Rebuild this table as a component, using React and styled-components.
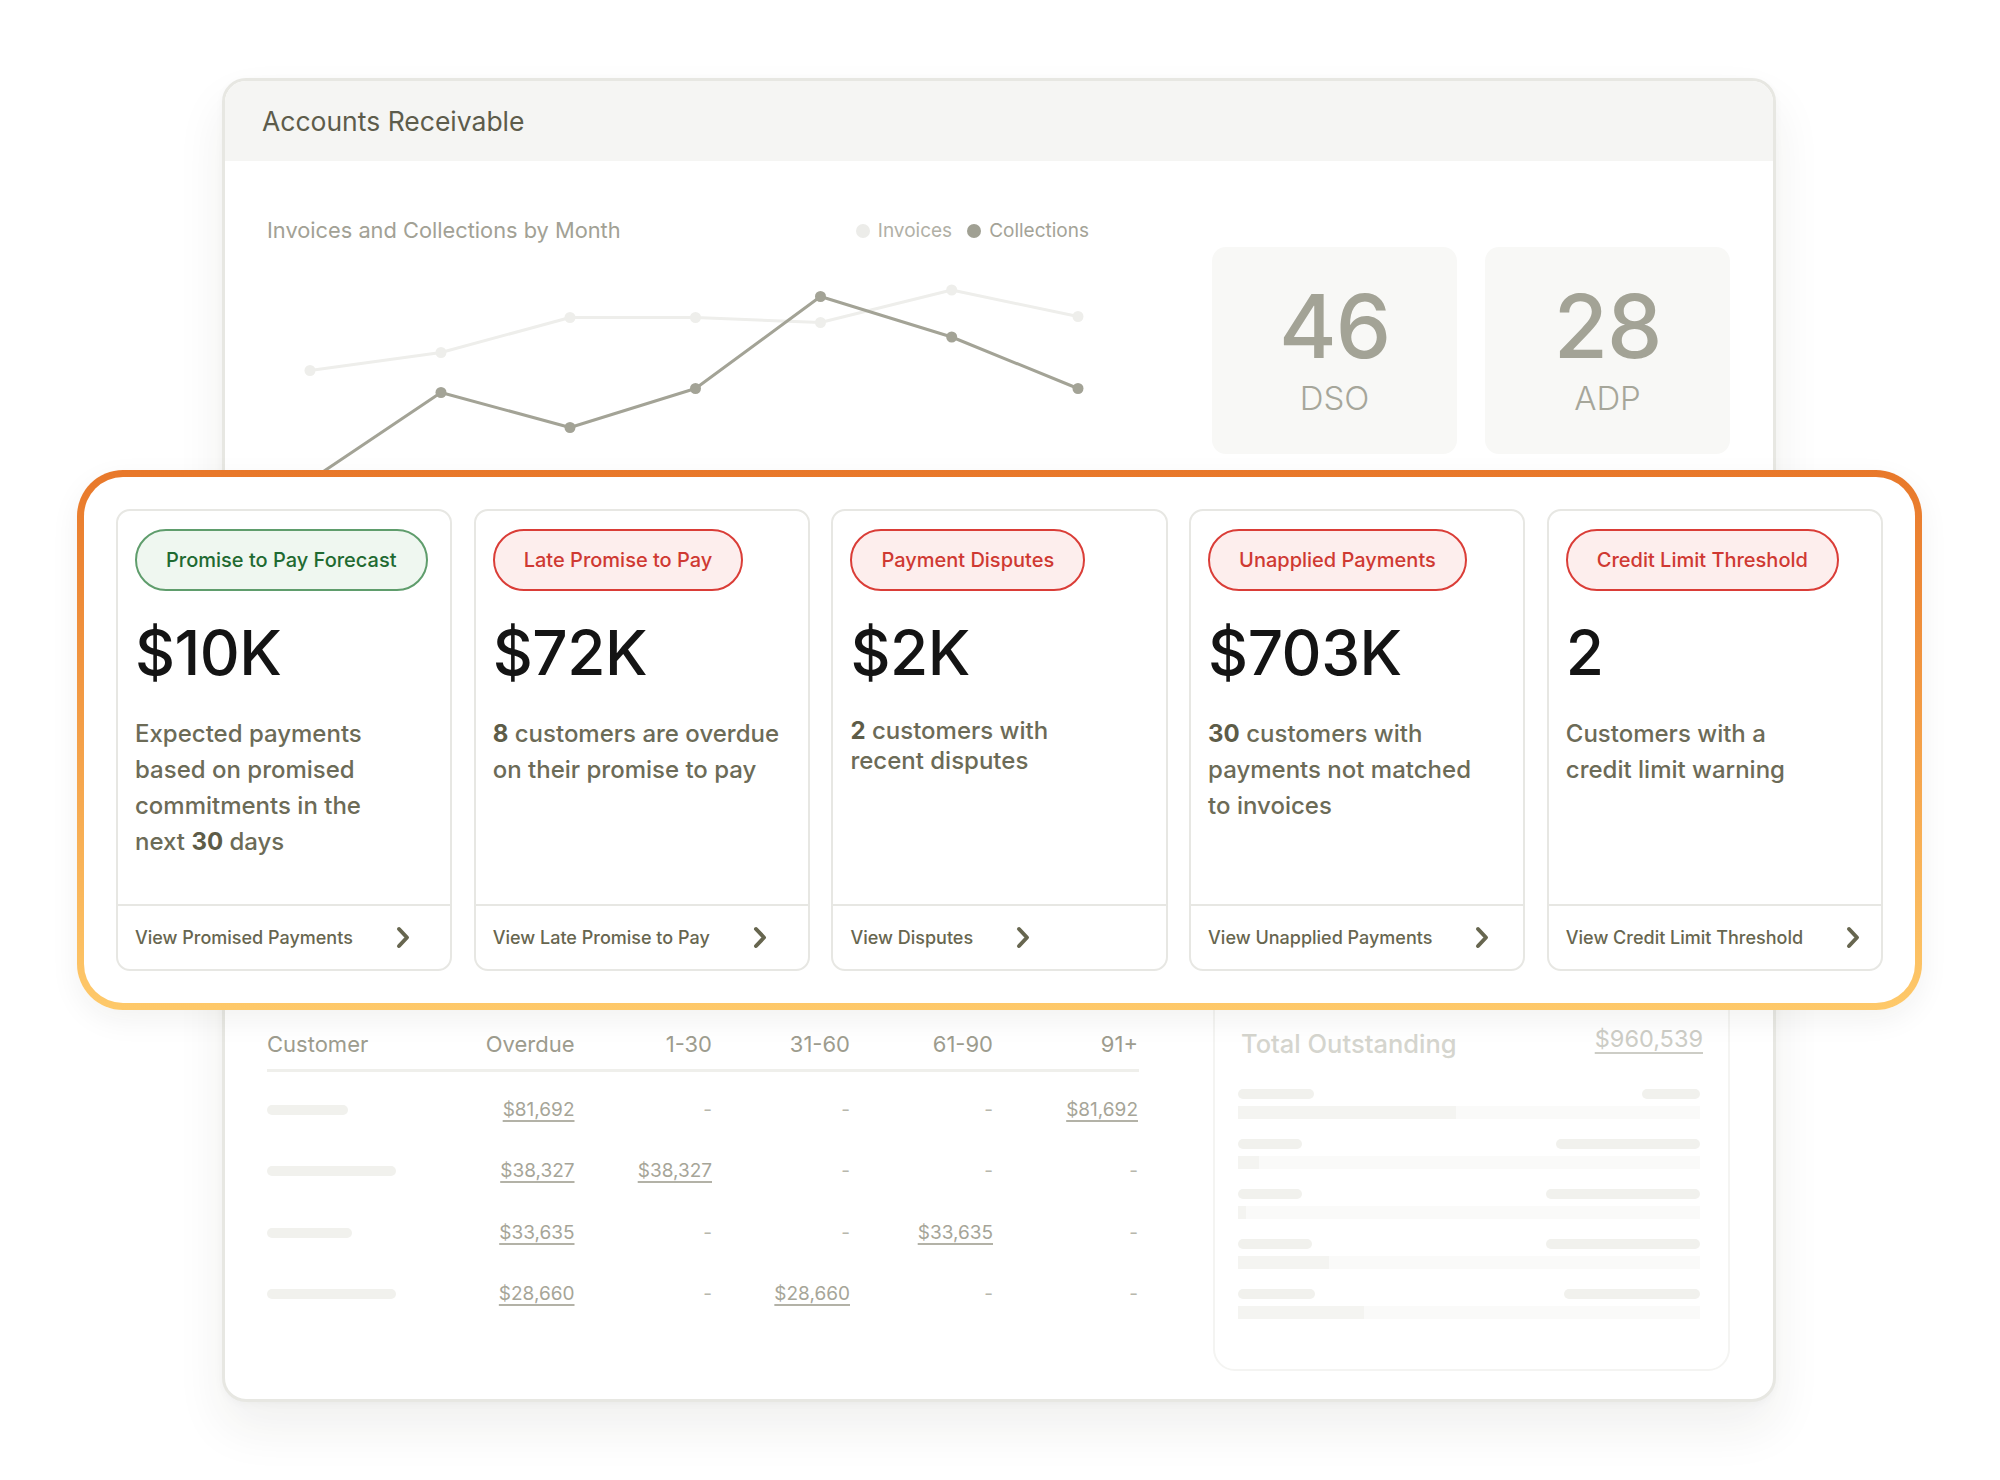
import React from "react";
import styled, { createGlobalStyle, css } from "styled-components";

const GlobalStyle = createGlobalStyle`
  * { box-sizing: border-box; }
  html, body { margin: 0; padding: 0; background: #ffffff; }
  body { font-family: Inter, "Noto Sans", "Liberation Sans", sans-serif; }
`;

const Page = styled.div`
  position: relative;
  width: 2000px;
  height: 1480px;
  overflow: hidden;
  background: #ffffff;
  padding: 78px 0 0 222px;
`;

const Dashboard = styled.section`
  width: 1554px;
  border: 3px solid #e7e7e2;
  border-radius: 24px;
  background: #ffffff;
  overflow: hidden;
  box-shadow: 0 26px 50px rgba(40, 40, 25, 0.07), 0 2px 8px rgba(40, 40, 25, 0.03);
`;

const Header = styled.header`
  height: 80px;
  display: flex;
  align-items: center;
  padding: 0 37px;
  background: #f5f5f3;
`;

const HeaderTitle = styled.h1`
  margin: 0;
  font-size: 26.5px;
  font-weight: 400;
  color: #5d5c4b;
`;

const Body = styled.div`
  padding: 0 43px 28px 42px;
`;

const TopSection = styled.div`
  display: flex;
  align-items: flex-start;
  padding-top: 56px;
`;

const ChartColumn = styled.div`
  width: 822px;
  display: flex;
  flex-direction: column;
`;

const ChartHead = styled.div`
  height: 27px;
  display: flex;
  align-items: center;
  justify-content: space-between;
`;

const ChartTitle = styled.h2`
  margin: 0;
  font-size: 21.8px;
  line-height: 27px;
  font-weight: 400;
  color: #a2a195;
`;

const Legend = styled.div`
  display: flex;
  align-items: center;
  gap: 15px;
`;

const LegendItem = styled.span`
  display: inline-flex;
  align-items: center;
  gap: 8px;
  font-size: 19px;
  font-weight: 400;
  color: ${(p) => p.$text};
`;

const LegendDot = styled.span`
  width: 14px;
  height: 14px;
  border-radius: 50%;
  background: ${(p) => p.$color};
`;

const ChartSvg = styled.svg`
  display: block;
  overflow: visible;
`;

const Kpis = styled.div`
  margin-left: auto;
  margin-top: 30px;
  display: flex;
  gap: 28px;
`;

const KpiBox = styled.div`
  width: 245px;
  height: 207px;
  padding-bottom: 4px;
  border-radius: 14px;
  background: #f8f8f6;
  display: flex;
  flex-direction: column;
  align-items: center;
  justify-content: center;
  gap: 12px;
`;

const KpiValue = styled.div`
  font-size: 88px;
  line-height: 88px;
  font-weight: 500;
  color: #a3a396;
  letter-spacing: -1px;
`;

const KpiLabel = styled.div`
  font-size: 33px;
  line-height: 33px;
  font-weight: 300;
  color: #a6a69a;
`;

const BottomSection = styled.div`
  margin-top: 486px;
  display: grid;
  grid-template-columns: 872px 517px;
  justify-content: space-between;
  align-items: start;
`;

const AgingTable = styled.div`
  padding-top: 51px;
`;

const columns = css`
  display: grid;
  grid-template-columns: 200px 107.5px 137.5px 138px 143px 145px;
`;

const TableHeadRow = styled.div`
  ${columns};
  padding-bottom: 11px;
  border-bottom: 3px solid #efefeb;
`;

const HeadCell = styled.div`
  font-size: 22px;
  line-height: 27px;
  font-weight: 400;
  color: #9d9c8e;
  text-align: ${(p) => (p.$left ? "left" : "right")};
`;

const TableRows = styled.div`
  padding-top: 7px;
`;

const TableRow = styled.div`
  ${columns};
  height: 61.5px;
  align-items: center;
`;

const Cell = styled.div`
  text-align: right;
  font-size: 19px;
  line-height: 24px;
`;

const Amount = styled.span`
  color: #a6a598;
  text-decoration: underline;
  text-decoration-color: #b3b2a7;
  text-decoration-thickness: 1.5px;
  text-underline-offset: 4px;
`;

const Dash = styled.span`
  color: #b8b7ac;
`;

const NameBar = styled.div`
  height: 10px;
  width: ${(p) => p.$w}px;
  border-radius: 5px;
  background: #f1f1ed;
`;

const SummaryPanel = styled.div`
  border: 2px solid #f4f4f2;
  border-radius: 22px;
  padding: 47px 28px 50px 23px;
`;

const SummaryHead = styled.div`
  display: flex;
  justify-content: space-between;
  align-items: flex-start;
`;

const SummaryTitle = styled.div`
  margin-left: 3px;
  font-size: 25.5px;
  line-height: 30px;
  font-weight: 500;
  color: #d5d5ce;
`;

const SummaryAmount = styled.div`
  margin-top: -5px;
  margin-right: -3px;
  font-size: 23.5px;
  line-height: 30px;
  font-weight: 400;
  color: #cdcdc6;
  text-decoration: underline;
  text-decoration-thickness: 1.5px;
  text-underline-offset: 5px;
`;

const SkeletonList = styled.div`
  margin-top: 30px;
  display: flex;
  flex-direction: column;
  gap: 20px;
`;

const SkeletonItem = styled.div`
  display: flex;
  flex-direction: column;
  gap: 7px;
`;

const SkeletonLine = styled.div`
  display: flex;
  justify-content: space-between;
`;

const Pillbar = styled.div`
  height: 10px;
  width: ${(p) => p.$w}px;
  border-radius: 5px;
  background: #f1f1ed;
`;

const Track = styled.div`
  height: 13px;
  background: #fafaf9;
  display: flex;
`;

const Fill = styled.div`
  height: 100%;
  background: #f4f4f1;
`;

/* ---------- highlighted cards overlay ---------- */

const HighlightFrame = styled.div`
  position: absolute;
  left: 77px;
  top: 470px;
  width: 1845px;
  height: 540px;
  border: 7px solid transparent;
  border-radius: 46px;
  background: linear-gradient(#ffffff, #ffffff) padding-box,
    linear-gradient(180deg, #e8782a 0%, #f39c45 45%, #fec96a 100%) border-box;
  box-shadow: 0 10px 30px rgba(40, 40, 25, 0.06);
  padding: 32px;
`;

const CardRow = styled.div`
  height: 100%;
  display: flex;
  gap: 21.5px;
`;

const InsightCard = styled.article`
  flex: 1;
  min-width: 0;
  display: flex;
  flex-direction: column;
  border: 2px solid #e7e7e3;
  border-radius: 14px;
  background: #ffffff;
`;

const CardBody = styled.div`
  flex: 1;
  padding: 18px 18px 0 17px;
  display: flex;
  flex-direction: column;
  align-items: flex-start;
`;

const tagTones = {
  green: css`
    border-color: #5f9d6c;
    background: #eff7f0;
    color: #1f6a31;
  `,
  red: css`
    border-color: #da3d37;
    background: #fdeeed;
    color: #cf3932;
  `,
};

const Tag = styled.span`
  display: inline-flex;
  align-items: center;
  height: 62px;
  padding: 0 29px;
  border: 2px solid;
  border-radius: 31px;
  font-size: 20px;
  font-weight: 500;
  white-space: nowrap;
  ${(p) => tagTones[p.$tone]};
`;

const BigValue = styled.div`
  margin-top: 31px;
  font-size: 62px;
  line-height: 62px;
  font-weight: 500;
  color: #141414;
  letter-spacing: -0.5px;
`;

const Description = styled.p`
  margin: 32px 0 0;
  font-size: 24px;
  line-height: ${(p) => p.$lh}px;
  font-weight: 500;
  color: #6c6b57;
  white-space: nowrap;
`;

const Strong = styled.strong`
  font-weight: 700;
  color: #5d5c48;
`;

const CardFooter = styled.div`
  height: 65px;
  border-top: 2px solid #e7e7e3;
  padding: 0 18px 0 17px;
  display: flex;
  align-items: center;
  gap: 43px;
`;

const FooterLink = styled.span`
  font-size: 18px;
  font-weight: 500;
  color: #67664f;
  white-space: nowrap;
`;

const Chevron = () => (
  <svg width="14" height="23" viewBox="0 0 14 23" fill="none">
    <polyline
      points="3,3 11,11.5 3,20"
      stroke="#67664f"
      strokeWidth="4"
      strokeLinecap="round"
      strokeLinejoin="round"
    />
  </svg>
);

const xs = [43, 174, 303, 428.5, 553.5, 684.7, 811];
const invoices = [126.5, 108.5, 73.5, 73.5, 78.5, 46, 72.5];
const collections = [236.5, 148.5, 183.5, 144.5, 52.5, 93, 144.5];

const Series = ({ ys, color }) => (
  <g>
    <polyline
      points={xs.map((x, i) => `${x},${ys[i]}`).join(" ")}
      fill="none"
      stroke={color}
      strokeWidth="3"
      strokeLinejoin="round"
    />
    {xs.map((x, i) => (
      <circle key={i} cx={x} cy={ys[i]} r="5.5" fill={color} />
    ))}
  </g>
);

const tableRows = [
  { w: 81, cells: ["$81,692", "-", "-", "-", "$81,692"] },
  { w: 129, cells: ["$38,327", "$38,327", "-", "-", "-"] },
  { w: 85, cells: ["$33,635", "-", "-", "$33,635", "-"] },
  { w: 129, cells: ["$28,660", "-", "$28,660", "-", "-"] },
];

const skeletons = [
  { l: 76, r: 58, pct: 47.2 },
  { l: 64, r: 144, pct: 4.5 },
  { l: 64, r: 154, pct: 1.8 },
  { l: 74, r: 154, pct: 19.8 },
  { l: 77, r: 136, pct: 27.2 },
];

const cards = [
  {
    tone: "green",
    tag: "Promise to Pay Forecast",
    value: "$10K",
    lh: 36,
    desc: (
      <>
        Expected payments
        <br />
        based on promised
        <br />
        commitments in the
        <br />
        next <Strong>30</Strong> days
      </>
    ),
    link: "View Promised Payments",
  },
  {
    tone: "red",
    tag: "Late Promise to Pay",
    value: "$72K",
    lh: 36,
    desc: (
      <>
        <Strong>8</Strong> customers are overdue
        <br />
        on their promise to pay
      </>
    ),
    link: "View Late Promise to Pay",
  },
  {
    tone: "red",
    tag: "Payment Disputes",
    value: "$2K",
    lh: 30,
    desc: (
      <>
        <Strong>2</Strong> customers with
        <br />
        recent disputes
      </>
    ),
    link: "View Disputes",
  },
  {
    tone: "red",
    tag: "Unapplied Payments",
    value: "$703K",
    lh: 36,
    desc: (
      <>
        <Strong>30</Strong> customers with
        <br />
        payments not matched
        <br />
        to invoices
      </>
    ),
    link: "View Unapplied Payments",
  },
  {
    tone: "red",
    tag: "Credit Limit Threshold",
    value: "2",
    lh: 36,
    desc: (
      <>
        Customers with a
        <br />
        credit limit warning
      </>
    ),
    link: "View Credit Limit Threshold",
  },
];

export default function App() {
  return (
    <>
      <GlobalStyle />
      <Page>
        <Dashboard>
          <Header>
            <HeaderTitle>Accounts Receivable</HeaderTitle>
          </Header>
          <Body>
            <TopSection>
              <ChartColumn>
                <ChartHead>
                  <ChartTitle>Invoices and Collections by Month</ChartTitle>
                  <Legend>
                    <LegendItem $text="#b1b0a6">
                      <LegendDot $color="#ecece9" />
                      Invoices
                    </LegendItem>
                    <LegendItem $text="#a4a397">
                      <LegendDot $color="#a0a093" />
                      Collections
                    </LegendItem>
                  </Legend>
                </ChartHead>
                <ChartSvg width="822" height="250" viewBox="0 0 822 250">
                  <Series ys={invoices} color="#eeeeeb" />
                  <Series ys={collections} color="#a3a396" />
                </ChartSvg>
              </ChartColumn>
              <Kpis>
                <KpiBox>
                  <KpiValue>46</KpiValue>
                  <KpiLabel>DSO</KpiLabel>
                </KpiBox>
                <KpiBox>
                  <KpiValue>28</KpiValue>
                  <KpiLabel>ADP</KpiLabel>
                </KpiBox>
              </Kpis>
            </TopSection>

            <BottomSection>
              <AgingTable>
                <TableHeadRow>
                  <HeadCell $left>Customer</HeadCell>
                  <HeadCell>Overdue</HeadCell>
                  <HeadCell>1-30</HeadCell>
                  <HeadCell>31-60</HeadCell>
                  <HeadCell>61-90</HeadCell>
                  <HeadCell>91+</HeadCell>
                </TableHeadRow>
                <TableRows>
                  {tableRows.map((row, i) => (
                    <TableRow key={i}>
                      <NameBar $w={row.w} />
                      {row.cells.map((c, j) => (
                        <Cell key={j}>
                          {c === "-" ? <Dash>-</Dash> : <Amount>{c}</Amount>}
                        </Cell>
                      ))}
                    </TableRow>
                  ))}
                </TableRows>
              </AgingTable>

              <SummaryPanel>
                <SummaryHead>
                  <SummaryTitle>Total Outstanding</SummaryTitle>
                  <SummaryAmount>$960,539</SummaryAmount>
                </SummaryHead>
                <SkeletonList>
                  {skeletons.map((s, i) => (
                    <SkeletonItem key={i}>
                      <SkeletonLine>
                        <Pillbar $w={s.l} />
                        <Pillbar $w={s.r} />
                      </SkeletonLine>
                      <Track>
                        <Fill style={{ width: `${s.pct}%` }} />
                      </Track>
                    </SkeletonItem>
                  ))}
                </SkeletonList>
              </SummaryPanel>
            </BottomSection>
          </Body>
        </Dashboard>

        <HighlightFrame>
          <CardRow>
            {cards.map((c, i) => (
              <InsightCard key={i}>
                <CardBody>
                  <Tag $tone={c.tone}>{c.tag}</Tag>
                  <BigValue>{c.value}</BigValue>
                  <Description $lh={c.lh}>{c.desc}</Description>
                </CardBody>
                <CardFooter>
                  <FooterLink>{c.link}</FooterLink>
                  <Chevron />
                </CardFooter>
              </InsightCard>
            ))}
          </CardRow>
        </HighlightFrame>
      </Page>
    </>
  );
}
